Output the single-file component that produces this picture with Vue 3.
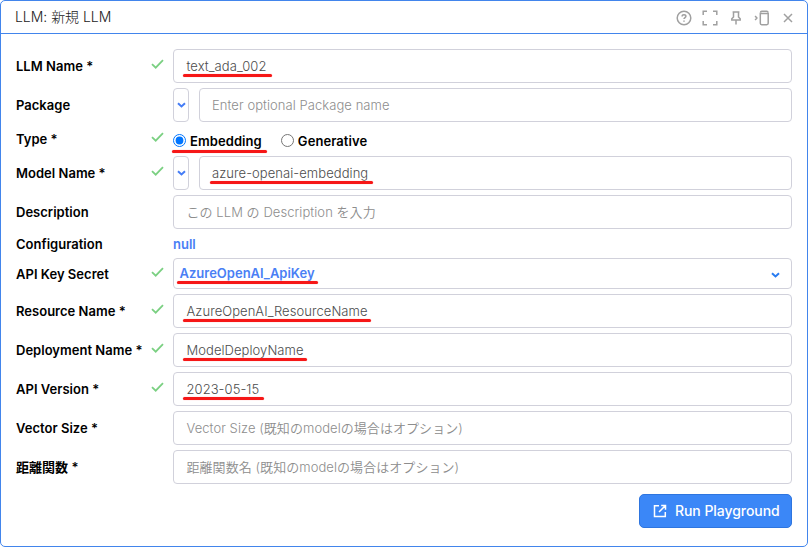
<script setup>
import { ref } from 'vue'

const kind = ref('embedding')
const rows = [
  { label: 'LLM Name *', ok: true, type: 'input', value: 'text_ada_002', mark: 89 },
  { label: 'Package', type: 'combo', placeholder: 'Enter optional Package name' },
  { label: 'Type *', ok: true, type: 'radio', mark: 95 },
  { label: 'Model Name *', ok: true, type: 'combo', value: 'azure-openai-embedding', mark: 163 },
  { label: 'Description', type: 'input', placeholder: 'この LLM の Description を入力' },
  { label: 'Configuration', type: 'link', value: 'null' },
  { label: 'API Key Secret', ok: true, type: 'select', value: 'AzureOpenAI_ApiKey', mark: 141 },
  { label: 'Resource Name *', ok: true, type: 'input', value: 'AzureOpenAI_ResourceName', mark: 188 },
  { label: 'Deployment Name *', ok: true, type: 'input', value: 'ModelDeployName', mark: 124 },
  { label: 'API Version *', ok: true, type: 'input', value: '2023-05-15', mark: 81 },
  { label: 'Vector Size *', type: 'input', placeholder: 'Vector Size (既知のmodelの場合はオプション)' },
  { label: '距離関数 *', type: 'input', placeholder: '距離関数名 (既知のmodelの場合はオプション)' }
]
</script>

<template>
  <section class="panel">
    <header class="bar">
      <h1>LLM: 新規 LLM</h1>
      <div class="tools">
        <svg width="16" height="16" viewBox="0 0 16 16"><circle cx="8" cy="8" r="6.8" /><path d="M6.1 6.4c0-1 .7-1.7 1.9-1.7s1.9.7 1.9 1.6c0 1.2-1.9 1.4-1.9 2.8M8 10.4v1.4" /></svg>
        <svg width="16" height="16" viewBox="0 0 16 16"><path d="M1.2 5V1.2H5M11 1.2h3.8V5M14.8 11v3.8H11M5 14.8H1.2V11" /></svg>
        <svg width="16" height="16" viewBox="0 0 16 16"><path d="M4.6 2h6.8M5.5 2v5L3.8 8.8V10h8.4V8.8L10.5 7V2M8 10v4.6" /></svg>
        <svg width="16" height="16" viewBox="0 0 16 16"><path d="m1.1 6 1.8 2-1.8 2M6.3 3.4h7.9v9.9q0 1.4-1.4 1.4H7.7q-1.4 0-1.4-1.4zM6.5 2.4q0-1.2 1.3-1.2h4.9q1.3 0 1.3 1.2" /></svg>
        <svg width="16" height="16" viewBox="0 0 16 16"><path d="m4 4 8 8M12 4l-8 8" /></svg>
      </div>
    </header>
    <div class="form">
      <div v-for="row in rows" :key="row.label" class="row" :class="row.type">
        <span class="label">{{ row.label }}</span>
        <span class="status">
          <svg v-if="row.ok" width="13" height="10" viewBox="0 0 13 10"><path d="m1 5.1 3.7 3.6L12 1.2" /></svg>
        </span>
        <div v-if="row.type === 'radio'" class="options">
          <label><input v-model="kind" type="radio" value="embedding">Embedding</label>
          <label><input v-model="kind" type="radio" value="generative">Generative</label>
          <i class="mark" :style="{ width: row.mark + 'px' }"></i>
        </div>
        <a v-else-if="row.type === 'link'" class="link">{{ row.value }}</a>
        <template v-else>
          <button v-if="row.type === 'combo'" class="drop"><svg width="9" height="6" viewBox="0 0 9 6"><path d="m1 1.2 3.5 3.2L8 1.2" /></svg></button>
          <div class="field">
            <span :class="{ hint: row.placeholder }">{{ row.value || row.placeholder }}</span>
            <svg v-if="row.type === 'select'" class="arrow" width="9" height="6" viewBox="0 0 9 6"><path d="m1 1.2 3.5 3.2L8 1.2" /></svg>
            <i v-if="row.mark" class="mark" :style="{ width: row.mark + 'px' }"></i>
          </div>
        </template>
      </div>
    </div>
    <footer>
      <button class="run">
        <svg width="14" height="14" viewBox="0 0 14 14"><path d="M6 1.7H1.5v10.8h10.8V8M8.2 1.5h4.3v4.3M12.2 1.8 6 8" /></svg>
        <span>Run Playground</span>
      </button>
    </footer>
  </section>
</template>

<style>
body { background: #fff; overflow: hidden; }
</style>
<style scoped>
* { box-sizing: border-box; }
.panel { width: 808px; height: 547px; border: 1px solid #4285ec; border-radius: 5px; font: 13px/18px Inter, "Noto Sans CJK JP", sans-serif; color: #000; background: #fff; }
.bar { height: 33px; border-bottom: 1px solid #4285ec; padding: 0 11.5px 0 14px; display: flex; align-items: center; justify-content: space-between; }
h1 { margin: 0; font-size: 14px; font-weight: 300; color: #222; letter-spacing: -.03px; }
.tools { display: flex; align-items: center; gap: 10px; padding-top: 2px; }
svg { display: block; fill: none; stroke: currentColor; flex: none; }
.tools svg { color: #a0a0a0; stroke-width: 1.5; }
.form { padding: 15px 15px 0; display: flex; flex-direction: column; gap: 5px; }
.row { height: 34px; display: flex; align-items: center; }
.row.radio { height: 24px; }
.row.link { height: 19px; }
.row.select { height: 31px; }
.label { width: 135px; font-weight: 600; white-space: nowrap; letter-spacing: .02px; }
.status { width: 22px; align-self: center; padding-bottom: 4px; }
.status svg { stroke: #7bd082; stroke-width: 1.8; }
.field { position: relative; flex: 1; height: 100%; display: flex; align-items: center; border: 1px solid #d1d1db; border-radius: 4px; padding: 0 12px 0 12.5px; color: #4c4c4c; font-weight: 350; letter-spacing: .06px; white-space: nowrap; }
.combo .field { padding-left: 12px; }
.hint { color: #8d8d8d; }
.drop { width: 16px; height: 34px; margin: 0 10px 0 0; padding: 0; border: 1px solid #d1d1db; border-radius: 4px; background: #fff; display: flex; align-items: center; justify-content: center; color: #447cf6; }
.drop svg, .arrow { stroke-width: 2; }
.select .field { padding: 0 11px 2px 5.5px; justify-content: space-between; font-weight: 600; letter-spacing: 0; color: #4a7ff5; }
.arrow { color: #287bf1; position: relative; top: 2px; }
a.link { color: #4a7ff5; font-weight: 600; }
.options { position: relative; flex: 1; display: flex; gap: 19px; font-weight: 600; padding-top: 4px; letter-spacing: .08px; }
.options label { display: flex; align-items: center; }
.options input { width: 13px; height: 13px; margin: 0 4px 2px 0; }
.mark { position: absolute; left: 9px; top: 24px; height: 3px; border-radius: 2px; background: #f61717; box-shadow: 0 0 1px #ff8b8b; }
.combo .mark { left: 10px; }
.select .mark { left: 3px; top: 22px; }
.options .mark { left: -1px; top: 22px; }
footer { display: flex; justify-content: flex-end; padding: 10px 15px 0; }
.run { width: 153px; height: 34px; border: 1px solid #2e75df; border-radius: 5px; background: #3b87f7; color: #fff; display: flex; align-items: center; padding: 0 13px; gap: 8px; font: 450 14px/18px Inter, sans-serif; letter-spacing: -.06px; white-space: nowrap; }
.run svg { stroke-width: 1.5; }
</style>
